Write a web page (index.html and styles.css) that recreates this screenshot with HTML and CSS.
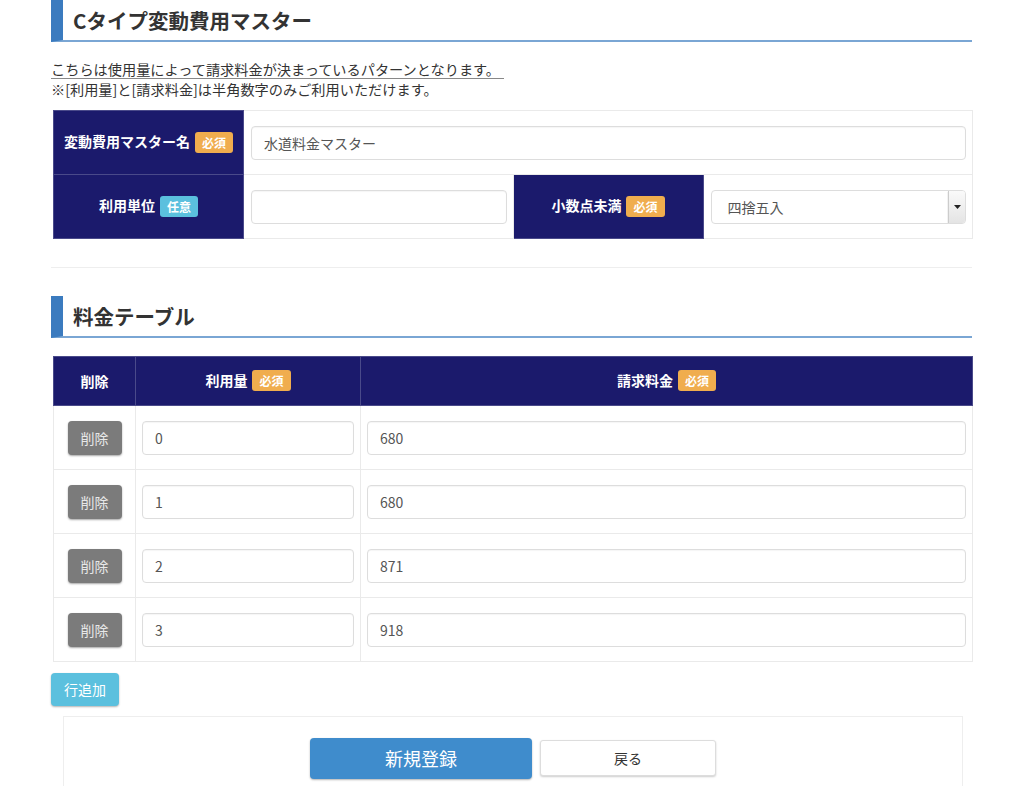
FILE: index.html
```html
<!DOCTYPE html>
<html lang="ja">
<head>
<meta charset="utf-8">
<title>Cタイプ変動費用マスター</title>
<link rel="stylesheet" href="styles.css">
</head>
<body>
<div class="page">
  <h2 class="sec-title">Cタイプ変動費用マスター</h2>
  <div class="desc">
    <p class="desc-line"><span class="underline">こちらは使用量によって請求料金が決まっているパターンとなります。</span></p>
    <p class="desc-line">※[利用量]と[請求料金]は半角数字のみご利用いただけます。</p>
  </div>

  <table class="form-table">
    <colgroup><col class="c-h"><col><col class="c-h"><col></colgroup>
    <tr>
      <th>変動費用マスター名<span class="badge req">必須</span></th>
      <td colspan="3"><div class="input">水道料金マスター</div></td>
    </tr>
    <tr>
      <th>利用単位<span class="badge opt">任意</span></th>
      <td><div class="input"></div></td>
      <th>小数点未満<span class="badge req">必須</span></th>
      <td>
        <div class="select"><span class="select-text">四捨五入</span><span class="select-arrow"><svg width="7" height="4" viewBox="0 0 7 4"><path d="M0 0h7L3.5 4z" fill="#222"/></svg></span></div>
      </td>
    </tr>
  </table>

  <div class="divider"></div>

  <h2 class="sec-title">料金テーブル</h2>

  <table class="price-table">
    <colgroup><col class="c-del"><col class="c-use"><col></colgroup>
    <tr>
      <th>削除</th>
      <th>利用量<span class="badge req">必須</span></th>
      <th>請求料金<span class="badge req">必須</span></th>
    </tr>
    <tr>
      <td class="del-cell"><span class="btn-del">削除</span></td>
      <td><div class="input">0</div></td>
      <td><div class="input">680</div></td>
    </tr>
    <tr>
      <td class="del-cell"><span class="btn-del">削除</span></td>
      <td><div class="input">1</div></td>
      <td><div class="input">680</div></td>
    </tr>
    <tr>
      <td class="del-cell"><span class="btn-del">削除</span></td>
      <td><div class="input">2</div></td>
      <td><div class="input">871</div></td>
    </tr>
    <tr>
      <td class="del-cell"><span class="btn-del">削除</span></td>
      <td><div class="input">3</div></td>
      <td><div class="input">918</div></td>
    </tr>
  </table>

  <div class="add-row"><span class="btn-add">行追加</span></div>

  <div class="footer-box">
    <span class="btn-primary">新規登録</span>
    <span class="btn-back">戻る</span>
  </div>
</div>
</body>
</html>
```

FILE: styles.css
```css
* { box-sizing: border-box; }
html, body { margin: 0; padding: 0; background: #fff; }
body {
  font-family: "Noto Sans CJK JP", "Noto Sans", sans-serif;
  color: #333;
  font-size: 14px;
}
.page {
  width: 921px;
  margin-left: 51px;
  padding-bottom: 40px;
}
.sec-title {
  margin: 0;
  height: 42px;
  border-left: 12px solid #3b7bbf;
  border-bottom: 2px solid #7aa6d4;
  padding-left: 10px;
  font-size: 20.5px;
  font-weight: 700;
  line-height: 40px;
  color: #333;
}
.desc { margin-top: 17px; }
.desc-line {
  margin: 0;
  font-size: 14.2px;
  line-height: 20px;
  color: #333;
}
.underline {
  display: inline-block;
  line-height: 17px;
  border-bottom: 1px solid #888;
  padding-right: 4px;
}
.form-table, .price-table {
  margin-left: 2px;
  width: 920px;
  border-collapse: collapse;
  table-layout: fixed;
}
.form-table { margin-top: 11px; }
.c-h { width: 190px; }
.form-table th, .form-table td,
.price-table th, .price-table td {
  border: 1px solid #eaeaea;
  padding: 0;
}
.form-table th, .price-table th {
  background: #1b1a6c;
  color: #fff;
  font-weight: 700;
  font-size: 14px;
  text-align: center;
  border-color: #4a4a8a;
}
.form-table tr { height: 64px; }
.form-table td { padding: 0 6px 0 7px; }
.badge {
  display: inline-block;
  vertical-align: middle;
  margin-left: 5px;
  padding: 0 7px;
  height: 21px;
  line-height: 21px;
  font-size: 12px;
  font-weight: 700;
  color: #fff;
  border-radius: 3px;
  position: relative;
  top: -1px;
}
.badge.req { background: #f0ad4e; }
.badge.opt { background: #5bc0de; }
.input {
  height: 34px;
  border: 1px solid #ddd;
  border-radius: 4px;
  background: #fff;
  box-shadow: inset 0 1px 1px rgba(0,0,0,0.04);
  padding: 0 12px;
  line-height: 32px;
  font-size: 14px;
  color: #555;
}
.select {
  display: flex;
  height: 34px;
  border: 1px solid #ddd;
  border-radius: 4px;
  background: #fff;
  overflow: hidden;
}
.select-text {
  flex: 1;
  padding-left: 16px;
  line-height: 32px;
  color: #555;
  font-size: 14px;
}
.select-arrow {
  width: 17px;
  display: flex;
  align-items: center;
  justify-content: center;
  background: linear-gradient(#fafafa, #e4e4e4);
  border-left: 1px solid #ccc;
  box-shadow: 0 1px 1px rgba(0,0,0,0.3);
}
.divider {
  margin-top: 28px;
  height: 1px;
  background: #eee;
  margin-bottom: 28px;
}
.price-table { margin-top: 18px; }
.c-del { width: 82px; }
.c-use { width: 225px; }
.price-table tr { height: 64px; }
.price-table tr:first-child { height: 49px; }
.price-table td { padding: 0 6px 0 6px; }
.price-table td.del-cell { text-align: center; padding: 0; }
.btn-del {
  display: inline-block;
  width: 54px;
  height: 34px;
  line-height: 34px;
  background: #7b7b7b;
  color: #e8e8e8;
  border-radius: 4px;
  font-size: 14px;
  box-shadow: 0 1px 2px rgba(0,0,0,0.35);
  vertical-align: middle;
}
.add-row { margin-top: 11px; }
.btn-add {
  display: inline-block;
  width: 68px;
  height: 33px;
  line-height: 33px;
  text-align: center;
  background: #5bc0de;
  color: #fff;
  border-radius: 4px;
  font-size: 14px;
  box-shadow: 0 1px 2px rgba(0,0,0,0.3);
}
.footer-box {
  margin: 10px 0 0 12px;
  width: 900px;
  height: 90px;
  border: 1px solid #eee;
  border-bottom: none;
  display: flex;
  justify-content: center;
  align-items: flex-start;
  gap: 8px;
  padding-top: 21px;
}
.btn-primary {
  width: 222px;
  height: 41px;
  line-height: 41px;
  text-align: center;
  background: #3f8ccc;
  color: #fff;
  font-size: 18px;
  border-radius: 4px;
  box-shadow: 0 1px 2px rgba(0,0,0,0.3);
}
.btn-back {
  margin-top: 2px;
  width: 176px;
  height: 36px;
  line-height: 34px;
  text-align: center;
  background: #fff;
  color: #333;
  border: 1px solid #ddd;
  font-size: 14px;
  border-radius: 3px;
  box-shadow: 0 1px 2px rgba(0,0,0,0.2);
}
```
